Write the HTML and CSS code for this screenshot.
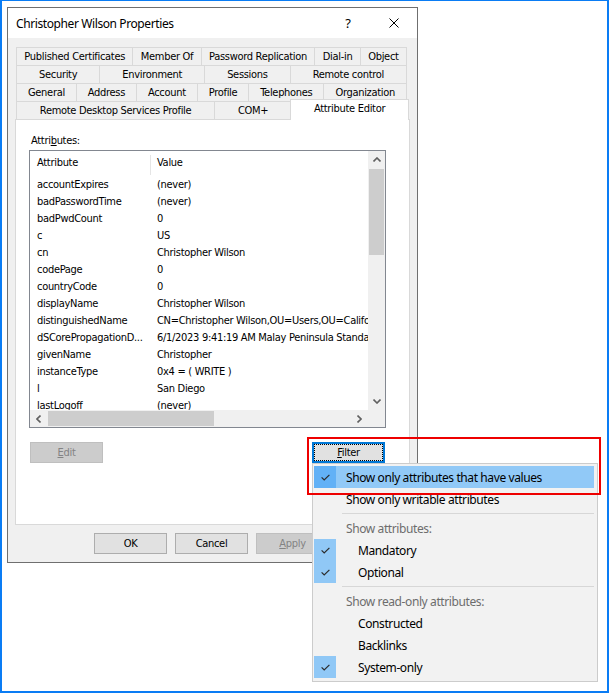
FILE: index.html
```html
<!DOCTYPE html>
<html>
<head>
<meta charset="utf-8">
<link rel="stylesheet" href="styles.css">
</head>
<body>
<div class="screen">
  <div class="window">
    <div class="titlebar">
      <span class="title">Christopher Wilson Properties</span>
      <span class="capbtn help">?</span>
      <span class="capbtn close"><svg width="10" height="10" viewBox="0 0 10 10"><path d="M0.5 0.5 L9.5 9.5 M9.5 0.5 L0.5 9.5" stroke="#000" stroke-width="1" fill="none"/></svg></span>
    </div>
    <div class="client">
      <div class="tabs">
        <div class="tabrow">
          <div class="tab">Published Certificates</div>
          <div class="tab">Member Of</div>
          <div class="tab">Password Replication</div>
          <div class="tab">Dial-in</div>
          <div class="tab">Object</div>
        </div>
        <div class="tabrow">
          <div class="tab">Security</div>
          <div class="tab">Environment</div>
          <div class="tab">Sessions</div>
          <div class="tab">Remote control</div>
        </div>
        <div class="tabrow">
          <div class="tab">General</div>
          <div class="tab">Address</div>
          <div class="tab">Account</div>
          <div class="tab">Profile</div>
          <div class="tab">Telephones</div>
          <div class="tab">Organization</div>
        </div>
        <div class="tabrow last">
          <div class="tab">Remote Desktop Services Profile</div>
          <div class="tab">COM+</div>
          <div class="tab selected">Attribute Editor</div>
        </div>
      </div>
      <div class="panel">
        <div class="label">Attri<u>b</u>utes:</div>
        <div class="listbox">
          <div class="lv">
            <div class="lv-header"><div class="c1">Attribute</div><div class="c2">Value</div></div>
            <div class="lv-row"><div class="c1">accountExpires</div><div class="c2">(never)</div></div>
            <div class="lv-row"><div class="c1">badPasswordTime</div><div class="c2">(never)</div></div>
            <div class="lv-row"><div class="c1">badPwdCount</div><div class="c2">0</div></div>
            <div class="lv-row"><div class="c1">c</div><div class="c2">US</div></div>
            <div class="lv-row"><div class="c1">cn</div><div class="c2">Christopher Wilson</div></div>
            <div class="lv-row"><div class="c1">codePage</div><div class="c2">0</div></div>
            <div class="lv-row"><div class="c1">countryCode</div><div class="c2">0</div></div>
            <div class="lv-row"><div class="c1">displayName</div><div class="c2">Christopher Wilson</div></div>
            <div class="lv-row"><div class="c1">distinguishedName</div><div class="c2">CN=Christopher Wilson,OU=Users,OU=California,DC=contoso,DC=com</div></div>
            <div class="lv-row"><div class="c1">dSCorePropagationD...</div><div class="c2">6/1/2023 9:41:19 AM Malay Peninsula Standard Time</div></div>
            <div class="lv-row"><div class="c1">givenName</div><div class="c2">Christopher</div></div>
            <div class="lv-row"><div class="c1">instanceType</div><div class="c2">0x4 = ( WRITE )</div></div>
            <div class="lv-row"><div class="c1">l</div><div class="c2">San Diego</div></div>
            <div class="lv-row"><div class="c1">lastLogoff</div><div class="c2">(never)</div></div>
          </div>
          <div class="vscroll">
            <div class="sb-arrow"><svg width="8" height="5" viewBox="0 0 8 5"><path d="M0.5 4.5 L4 1 L7.5 4.5" stroke="#606060" stroke-width="1.6" fill="none"/></svg></div>
            <div class="sb-track-v"><div class="thumb-v"></div></div>
            <div class="sb-arrow"><svg width="8" height="5" viewBox="0 0 8 5"><path d="M0.5 0.5 L4 4 L7.5 0.5" stroke="#606060" stroke-width="1.6" fill="none"/></svg></div>
          </div>
          <div class="hscroll">
            <div class="sb-arrow"><svg width="5" height="8" viewBox="0 0 5 8"><path d="M4.5 0.5 L1 4 L4.5 7.5" stroke="#606060" stroke-width="1.6" fill="none"/></svg></div>
            <div class="sb-track-h"><div class="thumb-h"></div></div>
            <div class="sb-arrow"><svg width="5" height="8" viewBox="0 0 5 8"><path d="M0.5 0.5 L4 4 L0.5 7.5" stroke="#606060" stroke-width="1.6" fill="none"/></svg></div>
          </div>
          <div class="corner"></div>
        </div>
        <div class="panel-buttons">
          <div class="btn disabled"><u>E</u>dit</div>
          <div class="btn focused"><span class="focusrect"><u>F</u>ilter</span></div>
        </div>
      </div>
      <div class="dlg-buttons">
        <div class="btn">OK</div>
        <div class="btn">Cancel</div>
        <div class="btn disabled"><u>A</u>pply</div>
      </div>
    </div>
  </div>

  <div class="menu">
    <div class="mi hot checked"><span class="chk"><svg width="9" height="7" viewBox="0 0 9 7"><path d="M0.6 3.4 L3.2 6 L8.4 0.8" stroke="#2b2b2b" stroke-width="1.2" fill="none"/></svg></span><span class="mt">Show only attributes that have values</span></div>
    <div class="mi"><span class="chk"></span><span class="mt">Show only writable attributes</span></div>
    <div class="sep"></div>
    <div class="mi head"><span class="chk"></span><span class="mt">Show attributes:</span></div>
    <div class="mi sub checked"><span class="chk"><svg width="9" height="7" viewBox="0 0 9 7"><path d="M0.6 3.4 L3.2 6 L8.4 0.8" stroke="#2b2b2b" stroke-width="1.2" fill="none"/></svg></span><span class="mt">Mandatory</span></div>
    <div class="mi sub checked"><span class="chk"><svg width="9" height="7" viewBox="0 0 9 7"><path d="M0.6 3.4 L3.2 6 L8.4 0.8" stroke="#2b2b2b" stroke-width="1.2" fill="none"/></svg></span><span class="mt">Optional</span></div>
    <div class="sep"></div>
    <div class="mi head"><span class="chk"></span><span class="mt">Show read-only attributes:</span></div>
    <div class="mi sub"><span class="chk"></span><span class="mt">Constructed</span></div>
    <div class="mi sub"><span class="chk"></span><span class="mt">Backlinks</span></div>
    <div class="mi sub checked"><span class="chk"><svg width="9" height="7" viewBox="0 0 9 7"><path d="M0.6 3.4 L3.2 6 L8.4 0.8" stroke="#2b2b2b" stroke-width="1.2" fill="none"/></svg></span><span class="mt">System-only</span></div>
  </div>

  <div class="callout"></div>
</div>
</body>
</html>
```

FILE: styles.css
```css
* { box-sizing: border-box; }
html, body { margin: 0; padding: 0; }
body {
  width: 609px;
  height: 693px;
  overflow: hidden;
  background: #fff;
  font-family: "DejaVu Sans Condensed", "DejaVu Sans", sans-serif;
  font-size: 11px;
  letter-spacing: -0.3px;
  color: #000;
}
.screen {
  position: relative;
  width: 609px;
  height: 693px;
  border-style: solid;
  border-color: #0a7cf4;
  border-width: 1px 2px 2px 2px;
  background: #fff;
}

/* window */
.window {
  position: absolute;
  left: 5px;
  top: 6px;
  width: 411px;
  height: 556px;
  border: 1px solid #6f6f6f;
  background: #f0f0f0;
  display: flex;
  flex-direction: column;
}
.titlebar {
  height: 30px;
  background: #fff;
  display: flex;
  align-items: center;
  padding-left: 8px;
  font-family: "Noto Sans", sans-serif;
  font-size: 12px;
  letter-spacing: 0;
}
.title { flex: 1; letter-spacing: -0.4px; }
.capbtn {
  width: 46px;
  height: 30px;
  display: flex;
  align-items: center;
  justify-content: center;
}
.help { font-size: 13px; }

.client {
  flex: 1;
  display: flex;
  flex-direction: column;
  padding: 9px 7px 8px 7px;
}

/* tabs */
.tabs { margin: 0 3px 0 1px; }
.tabrow { display: flex; height: 18px; }
.tabrow.last { align-items: flex-end; }
.tab {
  flex: 1 1 auto;
  height: 18px;
  border: 1px solid #d9d9d9;
  border-bottom: none;
  margin-left: -1px;
  background: #f0f0f0;
  text-align: center;
  line-height: 17px;
  white-space: nowrap;
  padding: 0 4px;
}
.tab:first-child { margin-left: 0; }
.tab.selected {
  position: relative;
  z-index: 2;
  height: 21px;
  margin: 0 -2px -1px -2px;
  background: #fff;
  line-height: 18px;
}

.panel {
  flex: 1;
  border: 1px solid #d9d9d9;
  background: #fff;
  padding: 13px 0 0 13px;
}
.label { height: 15px; line-height: 15px; margin: 0 0 2px 2px; }

/* list box */
.listbox {
  width: 357px;
  height: 278px;
  border: 1px solid #828790;
  display: grid;
  grid-template-columns: 338px 17px;
  grid-template-rows: 259px 17px;
}
.lv { overflow: hidden; background: #fff; }
.lv-header, .lv-row { display: flex; white-space: nowrap; }
.lv-header { height: 25px; line-height: 24px; }
.lv-row { height: 17px; line-height: 17px; }
.c1 { width: 121px; flex: none; padding-left: 7px; overflow: hidden; }
.c2 { padding-left: 6px; }
.lv-header .c1 {
  background: linear-gradient(#e5e5e5, #e5e5e5) right 4px / 1px 20px no-repeat;
}

.vscroll, .hscroll, .corner { background: #f0f0f0; }
.vscroll { display: flex; flex-direction: column; }
.hscroll { display: flex; }
.sb-arrow {
  width: 17px;
  height: 17px;
  flex: none;
  display: flex;
  align-items: center;
  justify-content: center;
}
.sb-track-v { flex: 1; padding: 1px 1px 0 1px; }
.thumb-v { height: 86px; background: #cdcdcd; }
.sb-track-h { flex: 1; padding: 1px 0 1px 1px; }
.thumb-h { width: 166px; height: 15px; background: #cdcdcd; }

/* buttons */
.panel-buttons {
  width: 357px;
  margin-top: 14px;
  padding: 0 1px;
  display: flex;
  justify-content: space-between;
}
.btn {
  width: 73px;
  height: 21px;
  border: 1px solid #adadad;
  background: #e1e1e1;
  text-align: center;
  line-height: 19px;
}
.btn.disabled {
  background: #cccccc;
  border-color: #bfbfbf;
  color: #838383;
}
.btn.focused {
  border: 2px solid #0078d7;
  padding: 0;
}
.focusrect {
  display: block;
  height: 100%;
  border: 1px dotted #000;
  line-height: 15px;
}
.dlg-buttons {
  margin-top: 8px;
  padding-left: 79px;
  display: flex;
  gap: 8px;
}

/* context menu */
.menu {
  position: absolute;
  left: 310px;
  top: 462px;
  width: 286px;
  height: 219px;
  background: #f2f2f2;
  border: 1px solid #cccccc;
  padding: 2px 3px 2px 1px;
  font-family: "Noto Sans", sans-serif;
  font-size: 12px;
  letter-spacing: -0.4px;
  z-index: 5;
}
.mi {
  display: flex;
  align-items: center;
  height: 22px;
  white-space: nowrap;
}
.chk {
  width: 22px;
  height: 22px;
  flex: none;
  display: flex;
  align-items: center;
  justify-content: center;
}
.mi.checked .chk { background: #90c8f6; }
.mi.hot { background: #91c9f7; }
.mi.hot .chk { background: #62b1f6; }
.mt { padding-left: 10px; }
.mi.sub .mt { padding-left: 22px; }
.mi.head { color: #6d6d6d; }
.sep {
  height: 7px;
  margin-left: 28px;
  background: linear-gradient(#d7d7d7, #d7d7d7) 0 3px / 100% 1px no-repeat;
}

.callout {
  position: absolute;
  left: 305px;
  top: 436px;
  width: 294px;
  height: 58px;
  border: 2px solid #ee0000;
  z-index: 6;
}
```
